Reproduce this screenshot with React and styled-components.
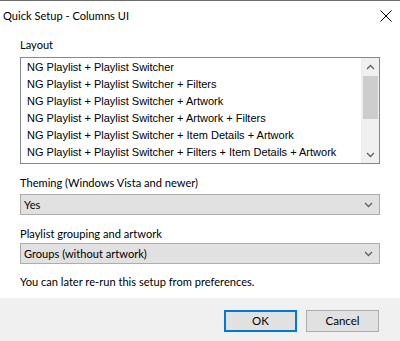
import React from "react";
import styled, { createGlobalStyle } from "styled-components";

const Global = createGlobalStyle`
  html, body {
    margin: 0;
    padding: 0;
    background: #ffffff;
  }
`;

const Window = styled.div`
  width: 400px;
  height: 341px;
  box-sizing: border-box;
  border-top: 1px solid #6b6b6b;
  display: flex;
  flex-direction: column;
  background: #ffffff;
  font-family: Lato, "Liberation Sans", sans-serif;
  font-size: 11.1px;
  color: #000000;
`;

const TitleBar = styled.div`
  height: 29px;
  display: flex;
  align-items: center;
  justify-content: space-between;
  padding: 0 8px 0 3px;
`;

const Title = styled.div`
  font-size: 11.1px;
  color: #000000;
`;

const CloseIcon = styled.svg`
  width: 12px;
  height: 12px;
`;

const Content = styled.div`
  padding: 7px 20px 0 20px;
  display: flex;
  flex-direction: column;
`;

const Label = styled.div`
  height: 16px;
  line-height: 16px;
  margin-top: ${p => p.$top || 0}px;
  margin-bottom: ${p => p.$bottom || 0}px;
`;

const ListBox = styled.div`
  height: 107px;
  box-sizing: border-box;
  border: 1px solid #828790;
  display: flex;
  background: #ffffff;
`;

const Items = styled.div`
  flex: 1;
  padding: 1px 0 0 6px;
  font-family: "Liberation Sans", sans-serif;
  font-size: 11px;
`;

const Item = styled.div`
  height: 17px;
  line-height: 17px;
  white-space: nowrap;
`;

const ScrollBar = styled.div`
  width: 17px;
  display: flex;
  flex-direction: column;
  background: #f0f0f0;
  border-left: 1px solid #e8ecf7;
`;

const ScrollButton = styled.div`
  height: 17px;
  display: flex;
  align-items: center;
  justify-content: center;
`;

const Track = styled.div`
  flex: 1;
  padding: 1px 1px;
`;

const Thumb = styled.div`
  height: 43px;
  background: #cdcdcd;
`;

const Combo = styled.div`
  height: 21px;
  box-sizing: border-box;
  border: 1px solid #adadad;
  background: #e1e1e1;
  display: flex;
  align-items: center;
  justify-content: space-between;
  padding: 0 6px 0 3px;
`;

const Note = styled.div`
  height: 16px;
  line-height: 16px;
  margin-top: 10px;
`;

const Footer = styled.div`
  margin-top: auto;
  height: 43px;
  background: #f0f0f0;
  display: flex;
  align-items: center;
  justify-content: flex-end;
  gap: 9px;
  padding: 0 21px 0 0;
`;

const Button = styled.button`
  width: 73px;
  height: 22px;
  box-sizing: border-box;
  background: #e1e1e1;
  border: ${p => (p.$default ? "2px solid #0078d7" : "1px solid #adadad")};
  font-family: Lato, "Liberation Sans", sans-serif;
  font-size: 11.5px;
  color: #000000;
  padding: 0;
  margin-top: 2px;
`;

const Chevron = ({ up }) => (
  <svg width="9" height="6" viewBox="0 0 9 6">
    <path
      d={up ? "M1 5 L4.5 1.5 L8 5" : "M1 1 L4.5 4.5 L8 1"}
      fill="none"
      stroke="#606060"
      strokeWidth="1.3"
    />
  </svg>
);

const items = [
  "NG Playlist + Playlist Switcher",
  "NG Playlist + Playlist Switcher + Filters",
  "NG Playlist + Playlist Switcher + Artwork",
  "NG Playlist + Playlist Switcher + Artwork + Filters",
  "NG Playlist + Playlist Switcher + Item Details + Artwork",
  "NG Playlist + Playlist Switcher + Filters + Item Details + Artwork",
];

export default function App() {
  return (
    <Window>
      <Global />
      <TitleBar>
        <Title>Quick Setup - Columns UI</Title>
        <CloseIcon viewBox="0 0 12 12">
          <path d="M0.5 0.5 L11.5 11.5 M11.5 0.5 L0.5 11.5" stroke="#000" strokeWidth="1" />
        </CloseIcon>
      </TitleBar>
      <Content>
        <Label $bottom={4}>Layout</Label>
        <ListBox>
          <Items>
            {items.map(t => (
              <Item key={t}>{t}</Item>
            ))}
          </Items>
          <ScrollBar>
            <ScrollButton>
              <Chevron up />
            </ScrollButton>
            <Track>
              <Thumb />
            </Track>
            <ScrollButton>
              <Chevron />
            </ScrollButton>
          </ScrollBar>
        </ListBox>
        <Label $top={11} $bottom={3}>Theming (Windows Vista and newer)</Label>
        <Combo>
          <span>Yes</span>
          <Chevron />
        </Combo>
        <Label $top={11} $bottom={1}>Playlist grouping and artwork</Label>
        <Combo>
          <span>Groups (without artwork)</span>
          <Chevron />
        </Combo>
        <Note>You can later re-run this setup from preferences.</Note>
      </Content>
      <Footer>
        <Button $default>OK</Button>
        <Button>Cancel</Button>
      </Footer>
    </Window>
  );
}
